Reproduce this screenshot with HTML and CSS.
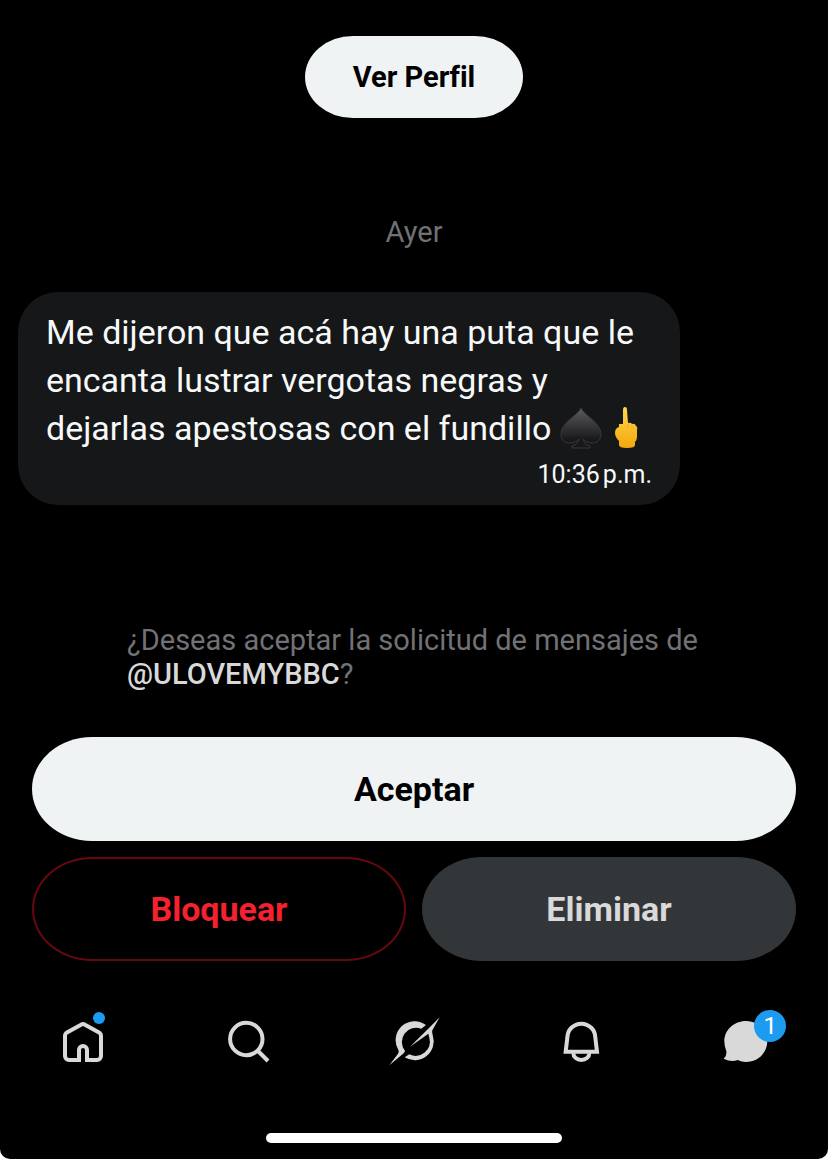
FILE: index.html
```html
<!DOCTYPE html>
<html lang="es">
<head>
    <meta charset="UTF-8">
    <meta name="viewport" content="width=device-width, initial-scale=1.0">
    <title>Solicitud de mensajes</title>
    <link rel="stylesheet" href="styles.css">
</head>
<body>
    <div class="screen">
        <main class="chat">
            <button class="btn profile-btn" type="button">Ver Perfil</button>
            <p class="day">Ayer</p>

            <div class="message">
                <p class="message-text">Me dijeron que acá hay una puta que le encanta lustrar vergotas negras y dejarlas apestosas con el fundillo
                    <svg class="emoji" viewBox="0 0 42 42" role="img" aria-label="♠️">
                        <defs>
                            <linearGradient id="spade" x1="0" y1="0" x2="0" y2="1">
                                <stop offset="0" stop-color="#5c5c5e"/>
                                <stop offset="0.8" stop-color="#18181a"/>
                            </linearGradient>
                        </defs>
                        <path d="M21 1C24 8 41 16 41 27c0 6-4 9-9 9-4 0-7-2-9-4 1 4 3 6 7 7v2H12v-2c4-1 6-3 7-7-2 2-5 4-9 4-5 0-9-3-9-9C1 16 18 8 21 1z" fill="url(#spade)" stroke="#38383a"/>
                    </svg>
                    <svg class="emoji emoji-hand" viewBox="0 0 28 42" role="img" aria-label="🖕">
                        <defs>
                            <linearGradient id="hand" x1="0" y1="0" x2="0" y2="1">
                                <stop offset="0" stop-color="#ffd84f"/>
                                <stop offset="1" stop-color="#f5a60b"/>
                            </linearGradient>
                        </defs>
                        <path d="M10 17V3q0-3 2-3t2 3l1 13q3-1 4 1 3-1 4 2 2 1 1 4v7q0 3-2 5v3q0 3-8 3t-8-3v-4q-4-4-4-8 0-5 4-6v-3z" fill="url(#hand)"/>
                        <path d="M15 17v4m4-3v4M8 37q7 3 13 0" fill="none" stroke="#efab24"/>
                    </svg>
                </p>
                <time class="message-time">10:36&#8239;p.m.</time>
            </div>
        </main>

        <section class="request">
            <p class="request-text">¿Deseas aceptar la solicitud de mensajes de <a href="#">@ULOVEMYBBC</a>?</p>
            <div class="actions">
                <button class="btn accept-btn" type="button">Aceptar</button>
                <button class="btn block-btn" type="button">Bloquear</button>
                <button class="btn delete-btn" type="button">Eliminar</button>
            </div>
        </section>

        <nav class="tab-bar">
            <a href="#" class="tab" aria-label="Inicio">
                <svg class="icon" viewBox="0 0 60 60">
                    <path d="M26 48H16a4 4 0 0 1-4-4V24q0-2.4 2-3.6l14-7.7q2-1.2 4 0l14 7.7q2 1.2 2 3.6v20a4 4 0 0 1-4 4H34V38a4 4 0 0 0-8 0z" fill="none" stroke="currentColor" stroke-width="4"/>
                    <circle cx="46" cy="6" r="6" fill="#1d9bf0"/>
                </svg>
            </a>
            <a href="#" class="tab" aria-label="Buscar">
                <svg class="icon" viewBox="0 0 60 60" fill="none" stroke="currentColor" stroke-width="4">
                    <circle cx="28.3" cy="27" r="16.2"/>
                    <path d="M40 39l10 10"/>
                </svg>
            </a>
            <a href="#" class="tab" aria-label="Grok">
                <svg class="icon" viewBox="12 21 180 180" fill="currentColor">
                    <path d="M138 60A57 57 0 0 0 55 135Q58 141 53 148L28 181L72 144L75 138A43 43 0 0 1 124 71z"/>
                    <path d="M179 37L157 76Q155 82 158 90A57 57 0 0 1 74 157L88 148A43 43 0 0 0 148 98L145 86L90 125L150 66z"/>
                </svg>
            </a>
            <a href="#" class="tab" aria-label="Notificaciones">
                <svg class="icon" viewBox="14 21 180 180" fill="none" stroke="currentColor" stroke-width="12">
                    <path d="M61 140L66 98A42 42 0 0 1 150 98L155 140z"/>
                    <path d="M84 145A24 20 0 0 0 132 145"/>
                </svg>
            </a>
            <a href="#" class="tab" aria-label="Mensajes">
                <span class="tab-icon">
                    <svg class="icon" viewBox="16 36 180 180" fill="currentColor">
                        <path d="M109 63C145 63 173 90 173 124S145 186 109 186C100 186 92 184 84 180Q64 187 42 176Q52 168 50 154Q44 140 44 124C44 90 73 63 109 63z"/>
                    </svg>
                    <span class="badge">1</span>
                </span>
            </a>
        </nav>
        <div class="home-indicator"></div>
    </div>
</body>
</html>
```
FILE: styles.css
```css
* {
    box-sizing: border-box;
}
html {
    background-color: #fff;
}
body {
    margin: 0;
    font-family: Roboto, "Liberation Sans", sans-serif;
    font-variant-ligatures: none;
    color: #d9d9d9;
}
p {
    margin: 0;
}
a {
    color: inherit;
    text-decoration: none;
}
.screen {
    display: flex;
    flex-direction: column;
    min-height: 100vh;
    padding-bottom: 16px;
    background-color: #000;
    border-radius: 0 0 10px 10px;
}
.chat {
    display: flex;
    flex-direction: column;
    padding: 36px 18px 0;
}
.btn {
    height: 104px;
    border: none;
    border-radius: 60px / 50%;
    font-family: inherit;
    font-size: 34px;
    font-weight: bold;
    font-variant-ligatures: none;
    cursor: pointer;
}
.profile-btn {
    align-self: center;
    height: 82px;
    padding: 0 48px;
    border-radius: 48px / 50%;
    background-color: #eff3f4;
    color: #000;
    font-size: 29px;
}
.day {
    margin: 96px 0 42px;
    text-align: center;
    font-size: 29px;
    line-height: 36px;
    color: #717176;
}
.message {
    max-width: 662px;
    padding: 16px 28px 14px;
    border-radius: 40px;
    background-color: #151719;
    color: #f7f9f9;
}
.message-text {
    font-size: 34px;
    line-height: 48px;
}
.emoji {
    width: 42px;
    height: 42px;
    vertical-align: -9px;
}
.emoji-hand {
    width: 28px;
    margin-left: 3px;
}
.message-time {
    display: block;
    margin-top: 7px;
    text-align: right;
    font-size: 25px;
    line-height: 32px;
}
.request {
    padding: 118px 32px 0;
}
.request-text {
    max-width: 574px;
    margin: 0 auto 46px;
    font-size: 29px;
    line-height: 34px;
    color: #717176;
}
.request-text a {
    color: #d9d9d9;
    font-weight: 500;
}
.actions {
    display: grid;
    grid-template-columns: 1fr 1fr;
    gap: 16px;
}
.accept-btn {
    grid-column: 1 / -1;
    background-color: #eff3f4;
    color: #000;
}
.block-btn {
    border: 2px solid #67070f;
    background-color: transparent;
    color: #f4212e;
}
.delete-btn {
    background-color: #333639;
    color: #d9d9d9;
}
.tab-bar {
    display: grid;
    grid-template-columns: repeat(5, 1fr);
    margin-top: 51px;
}
.tab {
    display: flex;
    justify-content: center;
}
.tab-icon {
    position: relative;
}
.icon {
    display: block;
    width: 60px;
    height: 60px;
    overflow: visible;
}
.badge {
    position: absolute;
    top: -2px;
    right: -11px;
    width: 32px;
    height: 32px;
    border-radius: 50%;
    background-color: #1d9bf0;
    color: #fff;
    font-size: 24px;
    line-height: 32px;
    text-align: center;
}
.home-indicator {
    width: 296px;
    height: 10px;
    margin: auto auto 0;
    border-radius: 5px;
    background-color: #fff;
}
```
